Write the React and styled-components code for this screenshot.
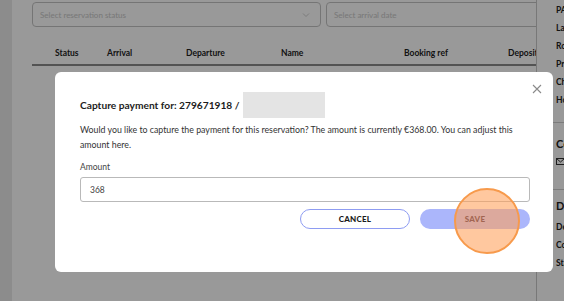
import React from "react";
import styled, { createGlobalStyle } from "styled-components";

const Global = createGlobalStyle`
  html, body { margin: 0; padding: 0; }
  body {
    width: 564px;
    height: 301px;
    overflow: hidden;
    font-family: Lato, "Open Sans", sans-serif;
    background: #fff;
  }
`;

// page under the overlay
const Page = styled.div`
  display: flex;
  width: 564px;
  height: 301px;
  overflow: hidden;
`;

const SideStrip = styled.div`
  width: 12px;
  flex: none;
  background: #e9e9e9;
`;

const Main = styled.div`
  width: 524px;
  flex: none;
  padding: 2px 0 0 20px;
  box-sizing: border-box;
  overflow: hidden;
  background: #fff;
`;

const Filters = styled.div`
  display: flex;
  gap: 5px;
  width: 560px;
`;

const Select = styled.div`
  box-sizing: border-box;
  width: ${(p) => p.$w}px;
  height: 25px;
  border: 1px solid #c4c4c4;
  border-radius: 4px;
  display: flex;
  align-items: center;
  justify-content: space-between;
  padding: 0 10px 0 7px;
  font-size: 8px;
  color: #c8c8c8;
`;

const Chevron = styled.svg`
  width: 8px;
  height: 8px;
`;

const HeaderRow = styled.div`
  display: grid;
  grid-template-columns: 23px 52px 79px 95px 123px 104px 60px;
  height: 39px;
  align-items: end;
  padding-bottom: 6px;
  box-sizing: border-box;
  border-bottom: 2px solid #8a8a8a;
  width: 540px;
  font-size: 8.5px;
  font-weight: 700;
  color: #222;
  white-space: nowrap;
`;

const Panel = styled.div`
  flex: 1;
  border-left: 1px solid #c8c8c8;
  background: #fff;
  padding-left: 19px;
  overflow: hidden;
  display: flex;
  flex-direction: column;
`;

const PanelItem = styled.div`
  font-size: 8.5px;
  font-weight: 700;
  color: #222;
  white-space: nowrap;
  height: 18px;
  line-height: 18px;
`;

const PanelTitle = styled.div`
  font-size: 11px;
  font-weight: 700;
  color: #222;
  white-space: nowrap;
  margin: 14px 0 8px;
`;

const PanelDivider = styled.div`
  height: 1px;
  background: #cfcfcf;
  margin: 13px 0 0 -19px;
`;

const Overlay = styled.div`
  position: fixed;
  inset: 0;
  background: rgba(0, 0, 0, 0.4);
`;

const Modal = styled.div`
  position: fixed;
  left: 55px;
  top: 72px;
  width: 498px;
  height: 200px;
  background: #fff;
  border-radius: 6px;
  box-sizing: border-box;
  padding: 20px 23px 0 25px;
  font-family: Lato, "Open Sans", sans-serif;
  color: #222;
`;

const Close = styled.button`
  position: absolute;
  right: 11px;
  top: 12px;
  border: none;
  background: none;
  padding: 0;
  width: 10px;
  height: 10px;
  display: flex;
`;

const TitleRow = styled.div`
  display: flex;
  align-items: center;
  gap: 3px;
  height: 26px;
`;

const Title = styled.h3`
  margin: 0;
  font-size: 10.2px;
  font-weight: 700;
  color: #1c1c1c;
`;

const Redacted = styled.div`
  width: 82px;
  height: 26px;
  background: #e4e4e4;
`;

const Text = styled.p`
  margin: 4px 0 0;
  font-size: 8.8px;
  line-height: 15px;
  color: #333;
`;

const Label = styled.div`
  margin-top: 10px;
  font-size: 8.5px;
  color: #444;
`;

const Input = styled.div`
  margin-top: 5px;
  width: 450px;
  height: 25px;
  box-sizing: border-box;
  border: 1px solid #b9b9b9;
  border-radius: 3px;
  display: flex;
  align-items: center;
  padding-left: 9px;
  font-size: 8.5px;
  color: #444;
`;

const Actions = styled.div`
  display: flex;
  justify-content: flex-end;
  gap: 10px;
  margin-top: 7px;
  width: 450px;
`;

const Button = styled.button`
  width: 110px;
  height: 20px;
  border-radius: 10px;
  box-sizing: border-box;
  font-family: Lato, "Open Sans", sans-serif;
  font-size: 8px;
  font-weight: 900;
  letter-spacing: 0.2px;
  border: ${(p) => (p.$primary ? "none" : "1.5px solid #8e9cf2")};
  background: ${(p) => (p.$primary ? "#abb6fb" : "#fff")};
  color: ${(p) => (p.$primary ? "#22124a" : "#1c1c1c")};
  padding: 0;
`;

const Highlight = styled.div`
  position: fixed;
  left: 454px;
  top: 188px;
  width: 66px;
  height: 66px;
  border-radius: 50%;
  box-sizing: border-box;
  border: 2px solid #f79a4c;
  background: rgba(255, 160, 90, 0.58);
  pointer-events: none;
`;

const columns = ["Status", "Arrival", "Departure", "Name", "Booking ref", "Deposit"];

export default function App() {
  return (
    <>
      <Global />
      <Page>
        <SideStrip />
        <Main>
          <Filters>
            <Select $w={289}>
              <span>Select reservation status</span>
              <Chevron viewBox="0 0 8 8">
                <path d="M1 2.5 L4 5.5 L7 2.5" fill="none" stroke="#c8c8c8" strokeWidth="0.9" />
              </Chevron>
            </Select>
            <Select $w={260}>
              <span>Select arrival date</span>
            </Select>
          </Filters>
          <HeaderRow>
            <span />
            {columns.map((c) => (
              <span key={c}>{c}</span>
            ))}
          </HeaderRow>
        </Main>
        <Panel>
          <PanelItem style={{ marginTop: 1 }}>PAX</PanelItem>
          <PanelItem>Language</PanelItem>
          <PanelItem>Room</PanelItem>
          <PanelItem>Price</PanelItem>
          <PanelItem>Check-in</PanelItem>
          <PanelItem>Hotel</PanelItem>
          <PanelDivider />
          <PanelTitle>Contact</PanelTitle>
          <svg width="9" height="7" viewBox="0 0 9 7">
            <rect x="0.5" y="0.5" width="8" height="6" fill="none" stroke="#333" />
            <path d="M0.5 0.5 L4.5 4 L8.5 0.5" fill="none" stroke="#333" />
          </svg>
          <PanelDivider style={{ marginTop: 24 }} />
          <PanelTitle style={{ margin: "9px 0 6px" }}>Details</PanelTitle>
          <PanelItem>Deposit</PanelItem>
          <PanelItem>Country</PanelItem>
          <PanelItem>Status</PanelItem>
        </Panel>
      </Page>
      <Overlay />
      <Modal>
        <Close aria-label="Close">
          <svg width="10" height="10" viewBox="0 0 10 10">
            <path d="M1 1 L9 9 M9 1 L1 9" stroke="#8a8a8a" strokeWidth="1.1" />
          </svg>
        </Close>
        <TitleRow>
          <Title>Capture payment for: 279671918 /</Title>
          <Redacted />
        </TitleRow>
        <Text>
          Would you like to capture the payment for this reservation? The amount is currently €368.00. You can adjust this amount here.
        </Text>
        <Label>Amount</Label>
        <Input>368</Input>
        <Actions>
          <Button>CANCEL</Button>
          <Button $primary>SAVE</Button>
        </Actions>
      </Modal>
      <Highlight />
    </>
  );
}
